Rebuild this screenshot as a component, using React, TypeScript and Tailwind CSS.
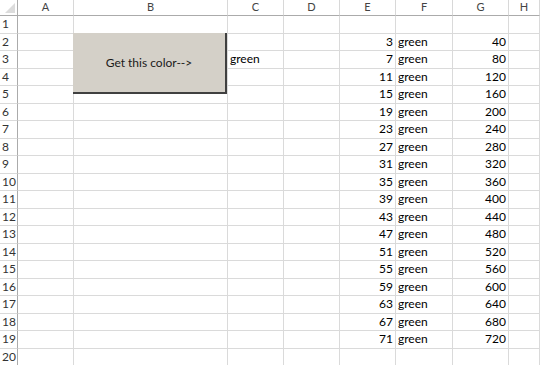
const cols = ['A', 'B', 'C', 'D', 'E', 'F', 'G', 'H']
const widths = 'grid-cols-[18px_56px_154px_56px_56px_56px_57px_56px_1fr]'

type Cell = { text?: string; right?: boolean }

function rowCells(r: number): Cell[] {
  const cells: Cell[] = Array.from({ length: 8 }, () => ({}))
  if (r === 3) cells[2] = { text: 'green' }
  if (r >= 2 && r <= 19) {
    const k = r - 2
    cells[4] = { text: String(3 + 4 * k), right: true }
    cells[5] = { text: 'green' }
    cells[6] = { text: String(40 * (k + 1)), right: true }
  }
  return cells
}

export default function App() {
  const rows = Array.from({ length: 20 }, (_, i) => i + 1)
  return (
    <div
      className="relative h-[365px] w-[540px] overflow-hidden bg-white text-[12px] text-black"
      style={{ fontFamily: 'Lato, "Open Sans", sans-serif' }}
    >
      <div className={`grid ${widths}`}>
        {/* header */}
        <div className="relative h-[16px] border-r border-b border-[#ababab] bg-white">
          <svg className="absolute right-[2px] bottom-[2px]" width="10" height="10">
            <polygon points="10,0 10,10 0,10" fill="#dcdcdc" />
          </svg>
        </div>
        {cols.map((c) => (
          <div
            key={c}
            className="flex h-[16px] items-center justify-center border-r border-b border-[#ababab] border-r-[#d8d8d8] text-[11px] text-[#444]"
          >
            {c}
          </div>
        ))}
        {rows.map((r) => (
          <Row key={r} r={r} />
        ))}
      </div>

      {/* form button */}
      <div className="absolute top-[33px] left-[73px] flex h-[61px] w-[154px] items-center justify-center border-r-2 border-b-2 border-r-[#404040] border-b-[#404040] bg-[#d4d0c8] text-[12px] text-[#1a1a1a]">
        Get this color--&gt;
      </div>
    </div>
  )
}

function Row({ r }: { r: number }) {
  const cells = rowCells(r)
  return (
    <>
      <div className="flex h-[17.5px] items-center border-r border-b border-r-[#ababab] border-b-[#dadada] pl-[2px] text-[12px] text-[#333]">
        {r}
      </div>
      {cells.map((c, i) => (
        <div
          key={i}
          className={`flex h-[17.5px] items-center overflow-visible whitespace-nowrap border-r border-b border-[#dadada] px-[2px] ${
            c.right ? 'justify-end' : 'justify-start'
          }`}
        >
          {c.text}
        </div>
      ))}
    </>
  )
}
